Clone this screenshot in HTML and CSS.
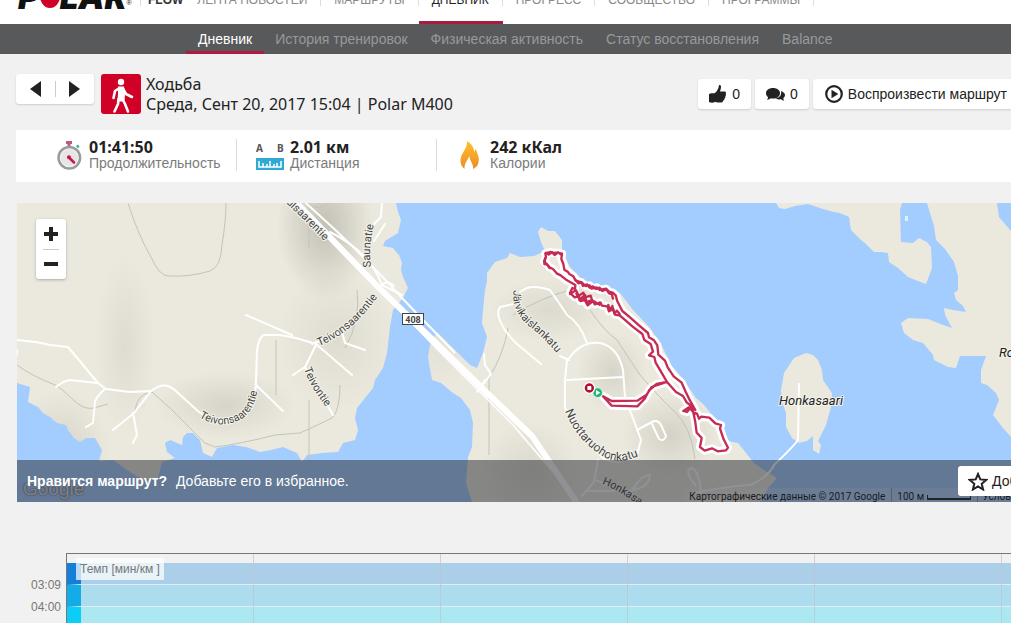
FILE: index.html
```html
<!DOCTYPE html>
<html lang="ru">
<head>
<meta charset="utf-8">
<title>Polar Flow</title>
<link rel="stylesheet" href="styles.css">
</head>
<body>
<header class="topbar">
  <a class="logo" href="#"><span>P</span><i class="logo-dot"></i><span>LAR</span><small>®</small></a>
  <nav class="menu">
    <a class="flow" href="#">FLOW</a>
    <a href="#">ЛЕНТА НОВОСТЕЙ</a>
    <a href="#">МАРШРУТЫ</a>
    <a class="current" href="#">ДНЕВНИК</a>
    <a href="#">ПРОГРЕСС</a>
    <a href="#">СООБЩЕСТВО</a>
    <a href="#">ПРОГРАММЫ</a>
  </nav>
</header>
<nav class="subnav">
  <a class="current" href="#">Дневник</a>
  <a href="#">История тренировок</a>
  <a href="#">Физическая активность</a>
  <a href="#">Статус восстановления</a>
  <a href="#">Balance</a>
</nav>
<main class="page">
  <section class="heading">
    <div class="pager">
      <button aria-label="Назад"><svg width="11" height="16" viewBox="0 0 11 16"><path d="M11 0v16L0 8z"/></svg></button>
      <button aria-label="Вперёд"><svg width="11" height="16" viewBox="0 0 11 16"><path d="M0 0v16l11-8z"/></svg></button>
    </div>
    <svg class="sport" viewBox="0 0 40 40" aria-hidden="true"><rect width="40" height="40" rx="3" fill="#d10027"/><circle cx="20" cy="8" r="3.2" fill="#fff"/><path d="M18.500 14 L14 17 12.500 24 M21.500 14l3.500 6 6 3 M17.500 25l-.5 5-3.500 7.500 M21.500 25l2.500 5 3 7.500" fill="none" stroke="#fff" stroke-width="2.600" stroke-linecap="round" stroke-linejoin="round"/><path d="M17 12.500h6l1 7-.5 8h-7l.5-8z" fill="#fff"/></svg>
    <h1>Ходьба<br>Среда, Сент 20, 2017 15:04 | Polar M400</h1>
    <div class="actions">
      <button><svg width="18" height="18" viewBox="0 0 18 18"><path d="M10.500 0c1.700 0 1.800 2 1.200 4l-.7 2.500h4.600c1.500 0 1.700 1.500 1.100 2.300.5.800.3 1.900-.4 2.400.3.800 0 1.800-.8 2.200.1 1-.3 1.800-1.200 2.100-.2 1.500-1.300 2-2.800 2H8.500c-1.700 0-2.200-.8-3.500-1V8.500C7.500 7.500 9.500 4 10 .3zM0 9c1.300-.8 2.700-1 5.500-.7v9.200c-2.800.3-4.200.1-5.500-.5z"/></svg>0</button>
      <button><svg width="19" height="13" viewBox="0 0 19 13"><path d="M7 0c4 0 7 2.200 7 5.200s-3 5.300-7 5.300c-.8 0-1.500-.1-2.200-.3-.8.800-2 1.400-3.800 1.500.7-.8 1.100-1.700 1.100-2.600C.8 8.200 0 6.800 0 5.200 0 2.200 3 0 7 0zM15 3c2.300.8 4 2.200 4 4.100 0 1.400-.7 2.400-1.700 3.200 0 .8.300 1.600 1 2.300-1.500 0-2.500-.5-3.200-1.300-2 .4-3.900 0-5.300-.8 3.700-.8 6.200-3.500 5.200-7.500z"/></svg>0</button>
      <button class="play"><svg width="18" height="18" viewBox="0 0 18 18"><circle cx="9" cy="9" r="7.800" fill="none" stroke="#222" stroke-width="2.200"/><path d="M6.500 4.800v8.400L13.300 9z"/></svg>Воспроизвести маршрут</button>
    </div>
  </section>
  <section class="stats">
    <div class="stat">
      <svg width="25" height="29" viewBox="0 0 25 29"><path d="M9 0h6v3h-1.500v4h-3V3H9z" fill="#bd5b76"/><path d="M19 5l2-1.500 1.500 2L21 7.500z" fill="#33b78d"/><circle cx="12.300" cy="16.700" r="10.800" fill="#f4f4f4" stroke="#999b9d" stroke-width="2.500"/><circle cx="12.300" cy="16.700" r="8.500" fill="#e6e6e6"/><path d="M11.500 16l5.500 5.500" stroke="#cb1744" stroke-width="2.500" stroke-linecap="round"/><circle cx="12" cy="16.300" r="2" fill="#cb1744"/></svg>
      <p><strong>01:41:50</strong><span>Продолжительность</span></p>
    </div>
    <div class="stat distance">
      <svg width="29" height="29" viewBox="0 0 29 29"><text x="0" y="11">A</text><text x="21" y="11">B</text><path d="M0 17h28v12H0z" fill="#31a9d5"/><path d="M3 20v6h22v-6M7 22v4M11 23v3M14 20v6M18 23v3M21 22v4" fill="none" stroke="#fff" stroke-width="1.500"/></svg>
      <p><strong>2.01 км</strong><span>Дистанция</span></p>
    </div>
    <div class="stat calories">
      <svg width="20" height="29" viewBox="0 0 20 29"><defs><linearGradient id="flame" x2="0" y2="1"><stop offset="0" stop-color="#ffc02e"/><stop offset="1" stop-color="#ed8c26"/></linearGradient></defs><path d="M7 0c1 7-6 12-6.500 19-.3 4 1.500 7 4 9-.5-5 2.500-8 5-13-.2 5 4.500 8 3.500 13 5-2 6.500-7 5.500-12-.5-3-2-5-2.500-8-1 1-1.500 2-1.500 4C14 7 12 3 7 0z" fill="url(#flame)"/></svg>
      <p><strong>242 кКал</strong><span>Калории</span></p>
    </div>
  </section>
  <section class="map">
    <svg class="terrain" viewBox="17 203 994 299" preserveAspectRatio="xMinYMin slice">
      <defs>
        <radialGradient id="hill"><stop offset="0" stop-color="#8f8d80" stop-opacity=".55"/><stop offset="1" stop-color="#8f8d80" stop-opacity="0"/></radialGradient>
        <path id="west" d="M17 203H396L398 212 401 220 398 233 385 241 383 246 393 248 397 253 399 255 402 263 401 270 403 277 408 288 403 298 393 310 390 327 387 353 383 368 375 380 373 388 365 398 357 408 355 418 358 430 355 440 343 443 338 452 322 453 307 455 302 462 297 453 283 447 271 450 260 452 246 447 233 445 217 448 212 457 203 453 200 440 193 433 187 433 183 437 182 445 170 440 165 443 167 452 175 458 162 462 158 478 143 480 127 470 113 460 99 461 102 450 95 438 86 438 80 442 74 438 68 430 66 425 57 423 50 417 43 413 38 407 28 402 30 387 17 383z"/>
        <path id="middle" d="M430 345L428 357 432 380 441 383 453 393 461 398 470 410 473 423 472 447 468 457 466 483 472 502H760L769 487 777 478 764 470 754 463 738 443 728 441 718 423 704 405 695 397 684 380 671 365 661 344 650 328 633 310 620 293 600 287 583 280 570 267 562 250 562 240 555 231 548 231 541 227 538 232 541 242 545 251 534 256 520 257 510 253 507 258 495 262 487 273 487 281 485 290 483 310 482 323 487 337 483 353 477 368 470 365 437 332z"/>
        <clipPath id="land"><use href="#west"/><use href="#middle"/></clipPath>
        <path id="l1" d="M286 203Q307 222 329 246"/>
        <path id="l2" d="M371 267Q368 247 375 220"/>
        <path id="l3" d="M319 346Q355 332 382 290"/>
        <path id="l4" d="M304 369Q310 387 330 412"/>
        <path id="l5" d="M199 417Q221 431 243 418Q258 406 258 380"/>
        <path id="l6" d="M514 290Q510 310 529 326Q544 337 566 364"/>
        <path id="l7" d="M565 411Q577 441 604 457Q620 466 645 453"/>
        <path id="l8" d="M602 484Q621 491 645 510"/>
      </defs>
      <rect x="17" y="203" width="994" height="299" fill="#a3ccff"/>
      <g fill="#ebe9de">
        <use href="#west"/><use href="#middle"/>
        <path d="M806 353L794 358 784 373 781 390 782 402 786 413 786 427 792 438 799 443 807 441 813 436 813 450 819 454 821 445 818 441 826 425 831 407 832 393 823 380 822 370 818 360 813 355z"/>
        <path d="M776 203L779 208 785 209 795 206 808 204 823 209 834 212 840 213 849 217 851 230 861 240 866 244 874 252 881 252 888 253 889 262 898 268 908 277 918 281 926 284 929 276 932 268 931 247 927 242 919 238 913 243 901 242 900 210 902 203z"/>
        <path d="M927 203L934 226 936 240 945 249 954 262 958 276 958 290 954 293 956 300 963 306 966 312 953 310 944 308 945 315 952 328 943 325 928 319 908 318 901 323 904 333 913 340 923 343 933 355 934 360 948 367 956 368 960 356 986 356 981 370 981 383 987 385 996 393 999 400 993 415 1003 428 1011 437V231L999 217 997 203z"/>
        <path d="M905 216h3v5h-3z" fill="#d9f4fa"/>
      </g>
      <g clip-path="url(#land)" fill="url(#hill)">
        <ellipse cx="325" cy="225" rx="48" ry="75" opacity=".8"/><ellipse cx="225" cy="405" rx="70" ry="34" opacity=".4"/><ellipse cx="60" cy="450" rx="50" ry="60" opacity=".4"/><ellipse cx="125" cy="345" rx="30" ry="90" opacity=".25"/><ellipse cx="337" cy="340" rx="60" ry="70" opacity=".25"/><ellipse cx="612" cy="372" rx="35" ry="40" opacity=".4"/><ellipse cx="670" cy="435" rx="48" ry="42" opacity=".45"/><ellipse cx="550" cy="310" rx="60" ry="32" opacity=".3"/><ellipse cx="440" cy="300" rx="40" ry="90" opacity=".3"/><ellipse cx="530" cy="470" rx="50" ry="50" opacity=".3"/>
      </g>
      <g fill="none" stroke="#c5c3b9" stroke-width="1">
        <path d="M128 203Q138 235 152 259 160 277 170 276 190 277 210 271 221 267 222 245 226 220 226 203M309 203v45M309 400v62M276 340v55M307 203q10 9 22 0M17 365Q30 375 55 385C70 393 78 411 94 408L108 404M135 412q1-18 17-20Q170 407 190 428L205 443 215 447Q240 444 275 435L300 433Q320 424 332 418 340 410 340 385M357 290q4 30-12 58M489 378v77M513 315Q540 298 570 290M590 310Q604 331 617 340L640 375Q660 398 675 412 691 427 695 459M489 378q15-25 19-50"/>
      </g>
      <g fill="none" stroke="#fff" stroke-width="2" stroke-linecap="round" stroke-linejoin="round">
        <path d="M17 340L36 342 50 345 68 347 98 383 106 389 130 392 151 391Q160 384 168 386 173 388 178 393L199 412Q220 428 240 419 256 406 256 380L257 350Q259 337 264 335L280 335 296 338 316 344 352 375M246 315L292 335M97 383L70 380Q65 380 56 387M105 389Q96 397 95 402L93 423 86 427M151 391L134 413 113 430M133 413L137 435 133 443M255 384L283 411M316 345L305 367 293 375M305 367L333 415M312 344L342 332 345 343 365 350M17 350v5M382 203L381 217 366 232M385 224L374 241M330 232q40 20 52 53L402 295M381 286q5-7 13 0M513 304L500 307Q497 312 499 318 504 332 517 344L541 364M520 292Q530 283 550 290 562 307 567 315 580 323 587 343M560 356L569 360M568 360Q580 341 600 343 618 347 623 370L625 397 641 440 637 455Q620 466 604 459 580 438 565 408L565 380 567 360M567 380L623 377M637 430L650 423Q657 418 661 425L666 436Q664 442 659 439L652 424M598 460L594 482 582 496M595 480Q610 485 614 491L588 491M630 494Q640 475 650 475 650 488 628 491M484 354L485 365 491 374 477 392 485 380M696 486Q682 469 693 468 700 475 701 493M694 493Q730 486 751 485 769 476 774 465 792 448 798 440L799 384"/>
        <path d="M365 275L436 348 513 425 577 500" stroke-width="1.500"/>
      </g>
      <path d="M289 195L380 289 436 343 483 389 532 436 577 503" fill="none" stroke="#fff" stroke-width="6"/>
      <path d="M285 185Q350 240 402 298L455 353" fill="none" stroke="#fff" stroke-width="2"/>
      <g class="roads">
        <text><textPath href="#l1">ulsaarentie</textPath></text><text><textPath href="#l2">Saunatie</textPath></text><text><textPath href="#l3">Teivonsaarentie</textPath></text><text><textPath href="#l4">Teivontie</textPath></text><text><textPath href="#l5">Teivonsaarentie</textPath></text><text><textPath href="#l6">Järvikaislankatu</textPath></text><text class="large"><textPath href="#l7">Nuottaruohonkatu</textPath></text><text><textPath href="#l8">Honkasa</textPath></text>
      </g>
      <rect x="402.500" y="313.500" width="21" height="11" fill="#fff" stroke="#444"/><text class="shield" x="413" y="322.500">408</text>
      <text class="place" x="779" y="405">Honkasaari</text><text class="place" x="999" y="357">Ro</text>
      <g transform="translate(530 220) scale(.33333)" fill="none" stroke-linejoin="round" stroke-linecap="round">
        <path d="M218 528L245 557 322 559 345 535 358 510 380 492 411 486 396 460 377 428 373 411 357 406 369 395 362 372 343 360 337 342 308 320 277 293 270 287 255 284 249 267 237 274 232 259 216 257 211 247 194 253 189 243 173 256 164 240 151 243 147 229 134 232 120 219 127 204 135 207 136 195 111 181 92 166 80 160 69 147 58 142 51 133 42 124 48 111 46 100 60 96 72 99 83 98 96 101 94 117 100 132 103 149 113 155 119 163 130 169 137 182 155 187 167 198 179 196 185 206 200 202 209 210 228 206 237 215 248 218 257 226 262 244 277 273 300 292 327 316 354 339 357 352 372 361 382 376 385 404 405 422 413 442 431 469 455 488 467 515 478 538 496 570 477 562 460 573 471 576 480 565 490 577 496 607 500 638 515 654 510 681 524 692 546 685 563 694 588 691 594 683 581 658 570 626 573 615 556 610 538 593 514 590 507 596 501 581 490 578 484 558 470 547 459 528 438 516 411 486 365 501 350 524 322 542 245 543 218 528" stroke="#fff" stroke-width="24"/>
        <path class="track-line" d="M218 528L245 557 322 559 345 535 358 510 380 492 411 486 396 460 377 428 373 411 357 406 369 395 362 372 343 360 337 342 308 320 277 293 270 287 255 284 249 267 237 274 232 259 216 257 211 247 194 253 189 243 173 256 164 240 151 243 147 229 134 232 120 219 127 204 135 207 136 195 111 181 92 166 80 160 69 147 58 142 51 133 42 124 48 111 46 100 60 96 72 99 83 98 96 101 94 117 100 132 103 149 113 155 119 163 130 169 137 182 155 187 167 198 179 196 185 206 200 202 209 210 228 206 237 215 248 218 257 226 262 244 277 273 300 292 327 316 354 339 357 352 372 361 382 376 385 404 405 422 413 442 431 469 455 488 467 515 478 538 496 570 477 562 460 573 471 576 480 565 490 577 496 607 500 638 515 654 510 681 524 692 546 685 563 694 588 691 594 683 581 658 570 626 573 615 556 610 538 593 514 590 507 596 501 581 490 578 484 558 470 547 459 528 438 516 411 486 365 501 350 524 322 542 245 543 218 528"/>
        <path class="track-line" d="M120 222l18-11 8 16 14-9 5 14 17-5 4 13-17 6-7-14-14 8M139 221l10 17 16-13 6 25 18-8 20 12M235 255l4 16 8-13 6 22 8-8 8 10M48 98l8 6 10-7 8 8 10-8 8 6M46 114l-3 18 8 1 8 11M137 180l8 10 10-2 4 10 12-5 8 10 10-4 8 8 12-4 8 10 12-5 8 12 8 2 4 14"/>
        <circle cx="203" cy="518" r="15" fill="#24b37b" stroke="#d9eee2" stroke-width="4"/><path d="M198 510l13 8-13 8z" fill="#fff"/>
        <circle cx="178" cy="504" r="16" fill="#b30c31" stroke="#fff" stroke-width="4"/><rect x="172" y="498" width="12" height="12" rx="2" fill="#fff"/>
      </g>
    </svg>
    <div class="zoom"><button aria-label="Увеличить"><svg width="14" height="14" viewBox="0 0 14 14"><path d="M5 0h4v5h5v4H9v5H5V9H0V5h5z"/></svg></button><button aria-label="Уменьшить"><svg width="14" height="14" viewBox="0 0 14 14"><path d="M0 5h14v4H0z"/></svg></button></div>
    <span class="google">Google</span>
    <div class="credits"><span>Картографические данные © 2017 Google</span><span class="scale">100 м <i></i></span><a href="#">Услов</a></div>
    <div class="favourite">
      <p><strong>Нравится маршрут?</strong> Добавьте его в избранное.</p>
      <button><svg width="20" height="19" viewBox="0 0 20 19"><path d="M10 2l2.300 5.400 5.900.5-4.500 3.900 1.400 5.700L10 14.400l-5.100 3.100 1.400-5.700L1.800 7.900l5.900-.5z" fill="none" stroke="#222" stroke-width="2"/></svg>Доб</button>
    </div>
  </section>
  <section class="chart">
    <div class="axis"><span>03:09</span><span>04:00</span></div>
    <div class="plot"><div class="zone one"></div><div class="zone two"></div><div class="zone three"></div><span class="series">Темп [мин/км ]</span></div>
  </section>
</main>
</body>
</html>
```
FILE: styles.css
```css
* { box-sizing: border-box; }
body {
  display: flex;
  flex-direction: column;
  height: 100vh;
  margin: 0;
  overflow: hidden;
  background: #f1f1f1;
  color: #222;
  font-family: "Liberation Sans", Arial, sans-serif;
  font-size: 14px;
}
a { color: inherit; text-decoration: none; }
p, h1 { margin: 0; }
button {
  display: flex;
  align-items: center;
  border: 0;
  padding: 0;
  background: #fff;
  color: #222;
  font: inherit;
  white-space: nowrap;
}
svg { flex: none; }
button svg { fill: #222; }

.topbar {
  display: flex;
  flex: none;
  align-items: flex-end;
  height: 24px;
  padding-left: 18px;
  overflow: hidden;
  background: #fff;
}
.logo {
  display: flex;
  align-items: flex-end;
  width: 122px;
  height: 40px;
  padding-bottom: 11px;
  color: #111;
  font: italic 900 33px/32px Inter, sans-serif;
}
.logo-dot { width: 20px; height: 24px; margin-bottom: 5px; border-radius: 50%; background: #d10027; }
.logo small { font: 7px/20px "Liberation Sans", sans-serif; }
.menu { display: flex; color: #888; font-size: 12px; line-height: 14px; }
.menu a {
  height: 40px;
  padding: 9px 14px 0 13px;
  border-bottom: 3px solid transparent;
  background: linear-gradient(#ddd, #ddd) right top / 1px 22px no-repeat;
  white-space: nowrap;
}
.menu .flow { padding-left: 8px; padding-right: 1px; color: #333; font-weight: bold; background: linear-gradient(#ddd, #ddd) left top / 1px 22px no-repeat; }
.menu .current { border-color: #a81c40; color: #222; }

.subnav {
  display: flex;
  flex: none;
  height: 30px;
  padding-left: 186px;
  background: #58595b;
  color: #97999b;
}
.subnav a { padding: 0 12px 0 11px; line-height: 30px; white-space: nowrap; }
.subnav .current { padding-left: 12px; color: #fff; box-shadow: inset 0 -3px #b01c3f; }

.page { display: flex; flex: 1; flex-direction: column; min-height: 0; padding: 20px 0 0 16px; }
.heading { display: flex; flex: none; align-items: flex-start; height: 56px; }
.pager { display: flex; height: 30px; border-radius: 3px; background: #fff; box-shadow: 0 1px 2px #ccc; }
.pager button { justify-content: center; width: 39px; background: none; }
.pager button + button { background: linear-gradient(#ccc, #ccc) left center / 1px 16px no-repeat; }
.sport { width: 40px; height: 40px; margin: 0 5px 0 7px; }
.heading h1 { font: 400 16px/20px "Noto Sans", sans-serif; white-space: nowrap; }
.actions { display: flex; gap: 4px; margin: 5px 0 0 auto; }
.actions button { gap: 5px; height: 30px; padding: 0 11px; border-radius: 3px; box-shadow: 0 1px 2px #ccc; }
.actions .play { padding: 0 4px 0 12px; border-radius: 3px 0 0 3px; }

.stats { display: flex; flex: none; height: 52px; padding: 9px 0; background: #fff; }
.stat { display: flex; gap: 7px; width: 221px; height: 32px; padding-left: 41px; border-right: 1px solid #ddd; }
.stat > svg { margin-top: 2px; }
.distance { gap: 5px; width: 200px; padding-left: 19px; }
.distance text { fill: #555; font: bold 10px "Noto Sans", sans-serif; }
.calories { gap: 10px; width: auto; padding-left: 23px; border: 0; }
.stat strong, .stat p span { display: block; line-height: 16px; white-space: nowrap; }
.stat strong { font: 700 16px/16px "Noto Sans", sans-serif; }
.stat p span { color: #7b7b7b; }

.map { position: relative; flex: none; height: 299px; margin: 21px 0 51px 1px; overflow: hidden; }
.terrain { display: block; width: 100%; height: 100%; }
.roads text { fill: #444; stroke: #f3f2ea; stroke-width: 2px; paint-order: stroke; font: 11px Roboto, sans-serif; }
.roads .large { font-size: 12px; }
.shield { fill: #444; font: bold 9px Roboto, sans-serif; text-anchor: middle; }
.place { fill: #222; stroke: #f3f2ea; stroke-width: 2px; paint-order: stroke; font: italic 13px Roboto, sans-serif; }
.track-line { stroke: #c52b54; stroke-width: 7px; }
.zoom { position: absolute; top: 16px; left: 19px; width: 30px; border-radius: 3px; background: #fff; box-shadow: 0 1px 3px #aaa; }
.zoom button { justify-content: center; width: 30px; height: 30px; background: none; }
.zoom button + button { background: linear-gradient(#ccc, #ccc) center top / 16px 1px no-repeat; }
.google { position: absolute; bottom: 2px; left: 6px; color: #ddd; font: 19px/22px "Liberation Sans", sans-serif; text-shadow: 0 0 2px #333; }
.credits {
  position: absolute;
  right: 0;
  bottom: 0;
  display: flex;
  height: 14px;
  background: rgba(255, 255, 255, .2);
  color: #111;
  font: 10px/18px Roboto, sans-serif;
  white-space: nowrap;
}
.credits > * { padding: 0 6px 0 5px; border-right: 1px solid #999; }
.credits a { padding: 0 0 0 5px; border: 0; }
.scale i { display: inline-block; width: 44px; height: 5px; border: solid #222; border-width: 0 1px 2px; }
.favourite {
  position: absolute;
  right: 0;
  bottom: 0;
  left: 0;
  display: flex;
  align-items: center;
  justify-content: space-between;
  height: 42px;
  padding-left: 10px;
  background: rgba(34, 36, 44, .5);
  color: #fff;
}
.favourite strong { margin-right: 5px; }
.favourite button { gap: 4px; width: 53px; height: 30px; padding-left: 10px; border-radius: 3px 0 0 3px; overflow: hidden; }

.chart { display: flex; flex: 1; min-height: 0; }
.axis { width: 50px; padding: 21px 5px 0 0; color: #777; font-size: 12px; line-height: 22px; text-align: right; }
.axis span { display: block; }
.plot {
  position: relative;
  display: flex;
  flex: 1;
  flex-direction: column;
  padding-top: 9px;
  border: solid #777;
  border-width: 1px 0 0 1px;
}
.plot::after { content: ""; position: absolute; inset: 0; background: repeating-linear-gradient(90deg, transparent 0 186px, rgba(190, 195, 205, .7) 186px 187px); }
.zone { height: 22px; border-bottom: 1px solid #ddeef5; border-left: 14px solid; }
.one { background: #abcfe9; border-left-color: #147fd8; }
.two { background: #addcee; border-left-color: #14ace6; }
.three { flex: 1; background: #ace8f2; border-left-color: #0bcef6; border-bottom: 0; }
.series { position: absolute; z-index: 1; top: 4px; left: 9px; padding: 0 4px; background: rgba(255, 255, 255, .72); color: #777; font-size: 12px; line-height: 22px; }
```
